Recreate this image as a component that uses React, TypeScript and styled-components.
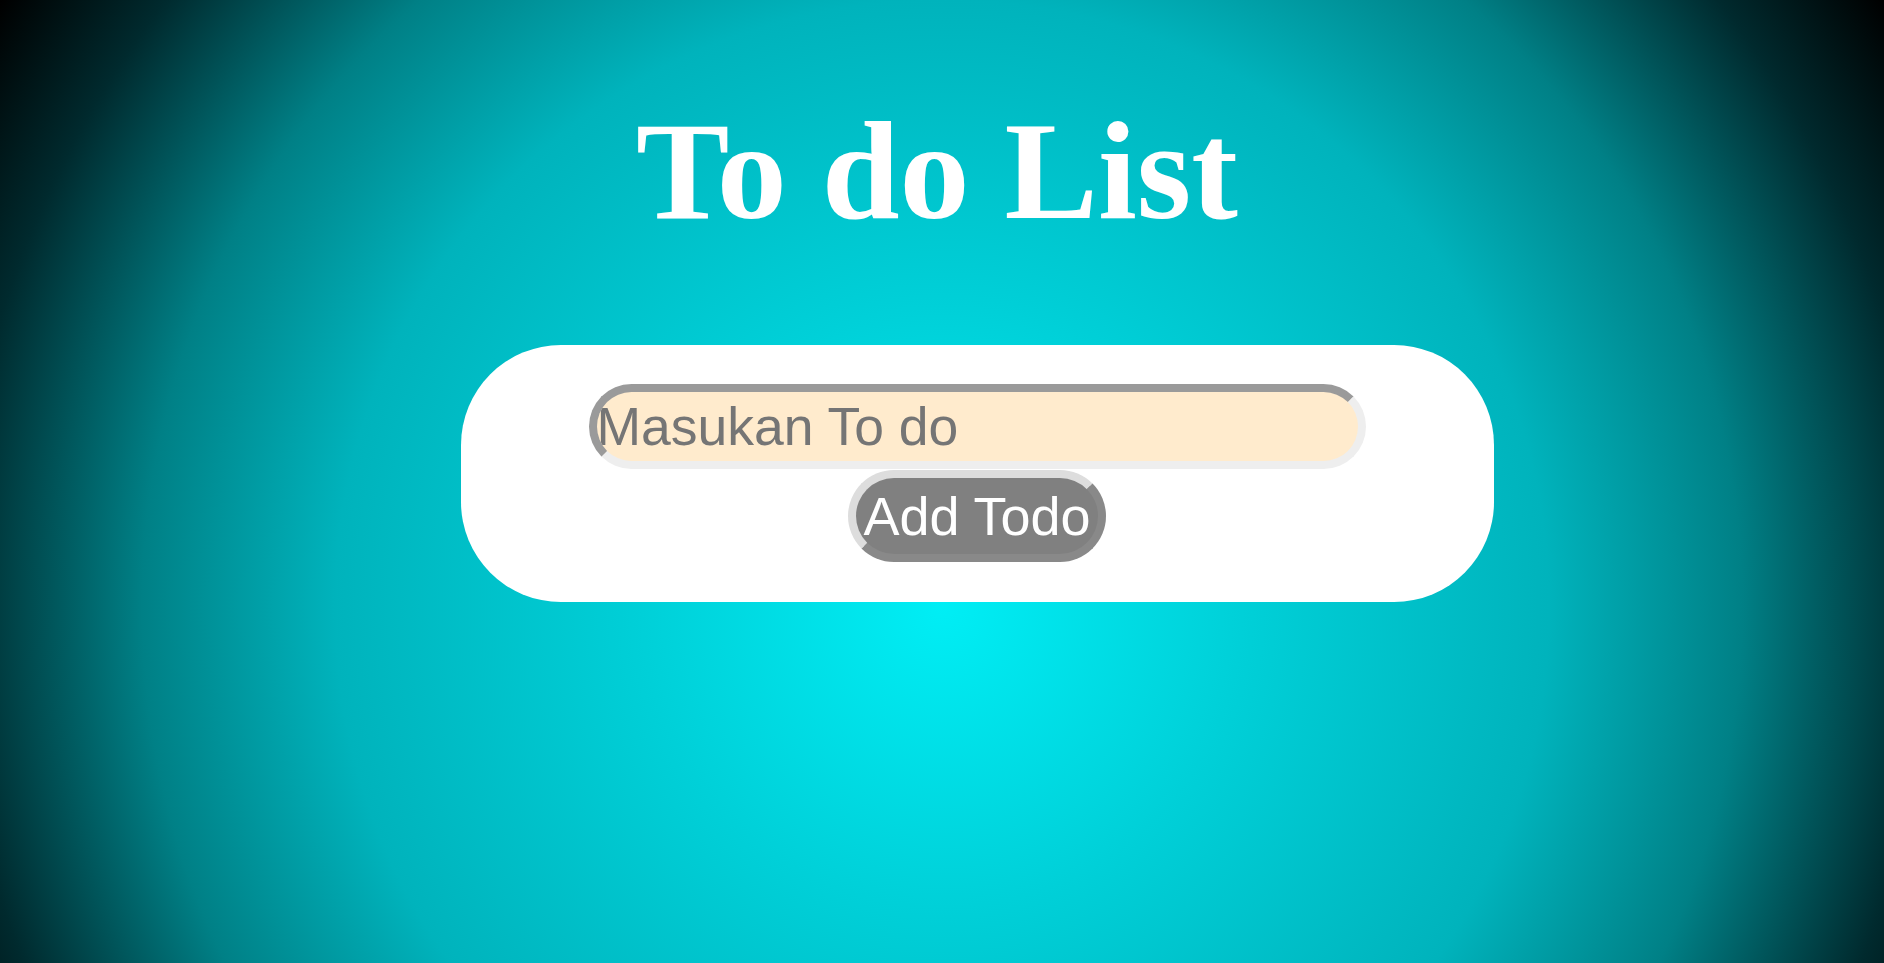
import React, { useState } from "react";
import styled, { createGlobalStyle } from "styled-components";

const GlobalStyle = createGlobalStyle`
  html, body {
    margin: 0;
    padding: 0;
  }
  body {
    font-family: "Liberation Sans", Arial, sans-serif;
    background: #000;
  }
`;

const Page = styled.main`
  min-height: 100vh;
  box-sizing: border-box;
  padding-top: 101px;
  display: flex;
  flex-direction: column;
  align-items: center;
  background: radial-gradient(
    circle at 50% 607px,
    #00eef5 0px,
    #00d0d8 300px,
    #00b3bc 607px,
    #008086 800px,
    #002a2e 985px,
    #000000 1120px
  );
`;

const Title = styled.h1`
  margin: 0 0 104px;
  padding-right: 10px;
  font-family: "Liberation Serif", "Times New Roman", serif;
  font-weight: bold;
  font-size: 140px;
  line-height: 1;
  color: #ffffff;
  white-space: nowrap;
`;

const CardRow = styled.div`
  align-self: stretch;
  display: flex;
  justify-content: center;
  padding-left: 70px;
`;

const Card = styled.form`
  width: 1033px;
  box-sizing: border-box;
  padding: 39px 128px 40px;
  background: #ffffff;
  border-radius: 100px;
  display: flex;
  flex-direction: column;
  align-items: center;
  gap: 1px;
`;

const TodoInput = styled.input`
  width: 100%;
  box-sizing: border-box;
  height: 85px;
  margin: 0;
  padding: 0;
  border: 8px inset #eeeeee;
  border-radius: 50px;
  background: #ffebcd;
  font-family: "Liberation Sans", Arial, sans-serif;
  font-size: 53.5px;
  color: #333;
  outline: none;

  &::placeholder {
    color: #757575;
  }
`;

const AddButton = styled.button`
  box-sizing: border-box;
  height: 92px;
  margin: 0;
  padding: 0 7px;
  border: 8px outset #dddddd;
  border-radius: 50px;
  background: #808080;
  color: #ffffff;
  font-family: "Liberation Sans", Arial, sans-serif;
  font-size: 54px;
  cursor: pointer;
`;

export default function App() {
  const [value, setValue] = useState("");
  return (
    <>
      <GlobalStyle />
      <Page>
        <Title>To do List</Title>
        <CardRow>
          <Card onSubmit={(e) => e.preventDefault()}>
            <TodoInput
              type="text"
              placeholder="Masukan To do"
              value={value}
              onChange={(e) => setValue(e.target.value)}
            />
            <AddButton type="submit">Add Todo</AddButton>
          </Card>
        </CardRow>
      </Page>
    </>
  );
}
